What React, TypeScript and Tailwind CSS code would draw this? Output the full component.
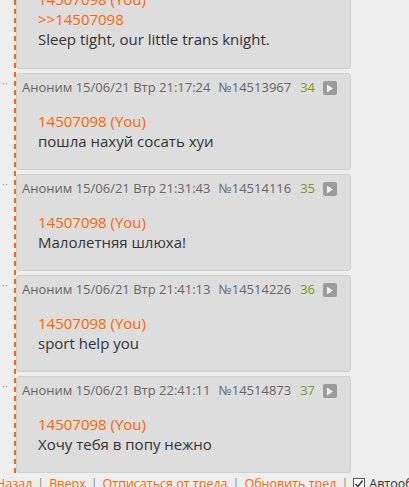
import React from "react";

const posts = [
  { time: "21:17:24", num: "14513967", idx: "34", text: "пошла нахуй сосать хуи" },
  { time: "21:31:43", num: "14514116", idx: "35", text: "Малолетняя шлюха!" },
  { time: "21:41:13", num: "14514226", idx: "36", text: "sport help you" },
  { time: "22:41:11", num: "14514873", idx: "37", text: "Хочу тебя в попу нежно" },
];

function Play() {
  return (
    <span className="ml-[8px] inline-flex h-[14px] w-[14px] items-center justify-center rounded-[2px] bg-[#9b9b9b]">
      <svg width="8" height="9" viewBox="0 0 8 9">
        <path d="M1 0.5 L7 4.5 L1 8.5 Z" fill="#f0f0f0" />
      </svg>
    </span>
  );
}

function Post({ time, num, idx, text }: { time: string; num: string; idx: string; text: string }) {
  return (
    <div className="relative flex">
      <div className="absolute left-[2px] top-[5px] text-[11px] leading-[10px] text-[#999]">··</div>
      <div className="ml-[16px] h-[97px] w-[335px] rounded-[3px] border border-[#cfcfcf] bg-[#dddddd]">
        <div className="flex h-[27px] items-center pl-[5px] pt-[1px] text-[13px] text-[#666]">
          <span>Аноним 15/06/21 Втр {time}</span>
          <span className="ml-[8px]">№{num}</span>
          <span className="ml-[9px] text-[#789922]">{idx}</span>
          <Play />
        </div>
        <div className="pl-[21px] pt-[10px] leading-[20px]">
          <div className="text-[#ff6600]">14507098 (You)</div>
          <div className="text-[#333]">{text}</div>
        </div>
      </div>
    </div>
  );
}

function Sep() {
  return <span className="mx-[5px] text-[#888]">|</span>;
}

export default function App() {
  return (
    <div
      className="relative h-[487px] w-[409px] overflow-hidden bg-[#eeeeee] text-[15px]"
      style={{ fontFamily: '"Open Sans", "DejaVu Sans", sans-serif' }}
    >
      <div
        className="absolute left-[14px] top-0 h-[474px] w-[2px]"
        style={{
          backgroundImage: "repeating-linear-gradient(to bottom, #ff6600 0 5px, transparent 5px 9px)",
        }}
      />
      <div className="relative mt-[-48px] flex flex-col gap-[4px]">
        <div className="ml-[16px] h-[117px] w-[335px] rounded-[3px] border border-[#cfcfcf] bg-[#dddddd]">
          <div className="pl-[21px] pt-[36px] leading-[20px]">
            <div className="text-[#ff6600]">14507098 (You)</div>
            <div className="text-[#ff6600]">&gt;&gt;14507098</div>
            <div className="text-[#333]">Sleep tight, our little trans knight.</div>
          </div>
        </div>
        {posts.map((p) => (
          <Post key={p.num} {...p} />
        ))}
        <div className="-ml-[4px] mt-[-1px] flex items-center whitespace-nowrap text-[12.5px] leading-[16px]">
          <span className="text-[#ff6600]">Назад</span>
          <Sep />
          <span className="text-[#ff6600]">Вверх</span>
          <Sep />
          <span className="text-[#ff6600]">Отписаться от треда</span>
          <Sep />
          <span className="text-[#ff6600]">Обновить тред</span>
          <Sep />
          <span className="inline-flex h-[13px] w-[13px] items-center justify-center border border-[#555] bg-white">
            <svg width="10" height="10" viewBox="0 0 10 10">
              <path d="M1.5 5 L4 7.5 L8.5 1.5" stroke="#333" strokeWidth="1.4" fill="none" />
            </svg>
          </span>
          <span className="ml-[4px] text-[#333]">Автообновление</span>
        </div>
      </div>
    </div>
  );
}
